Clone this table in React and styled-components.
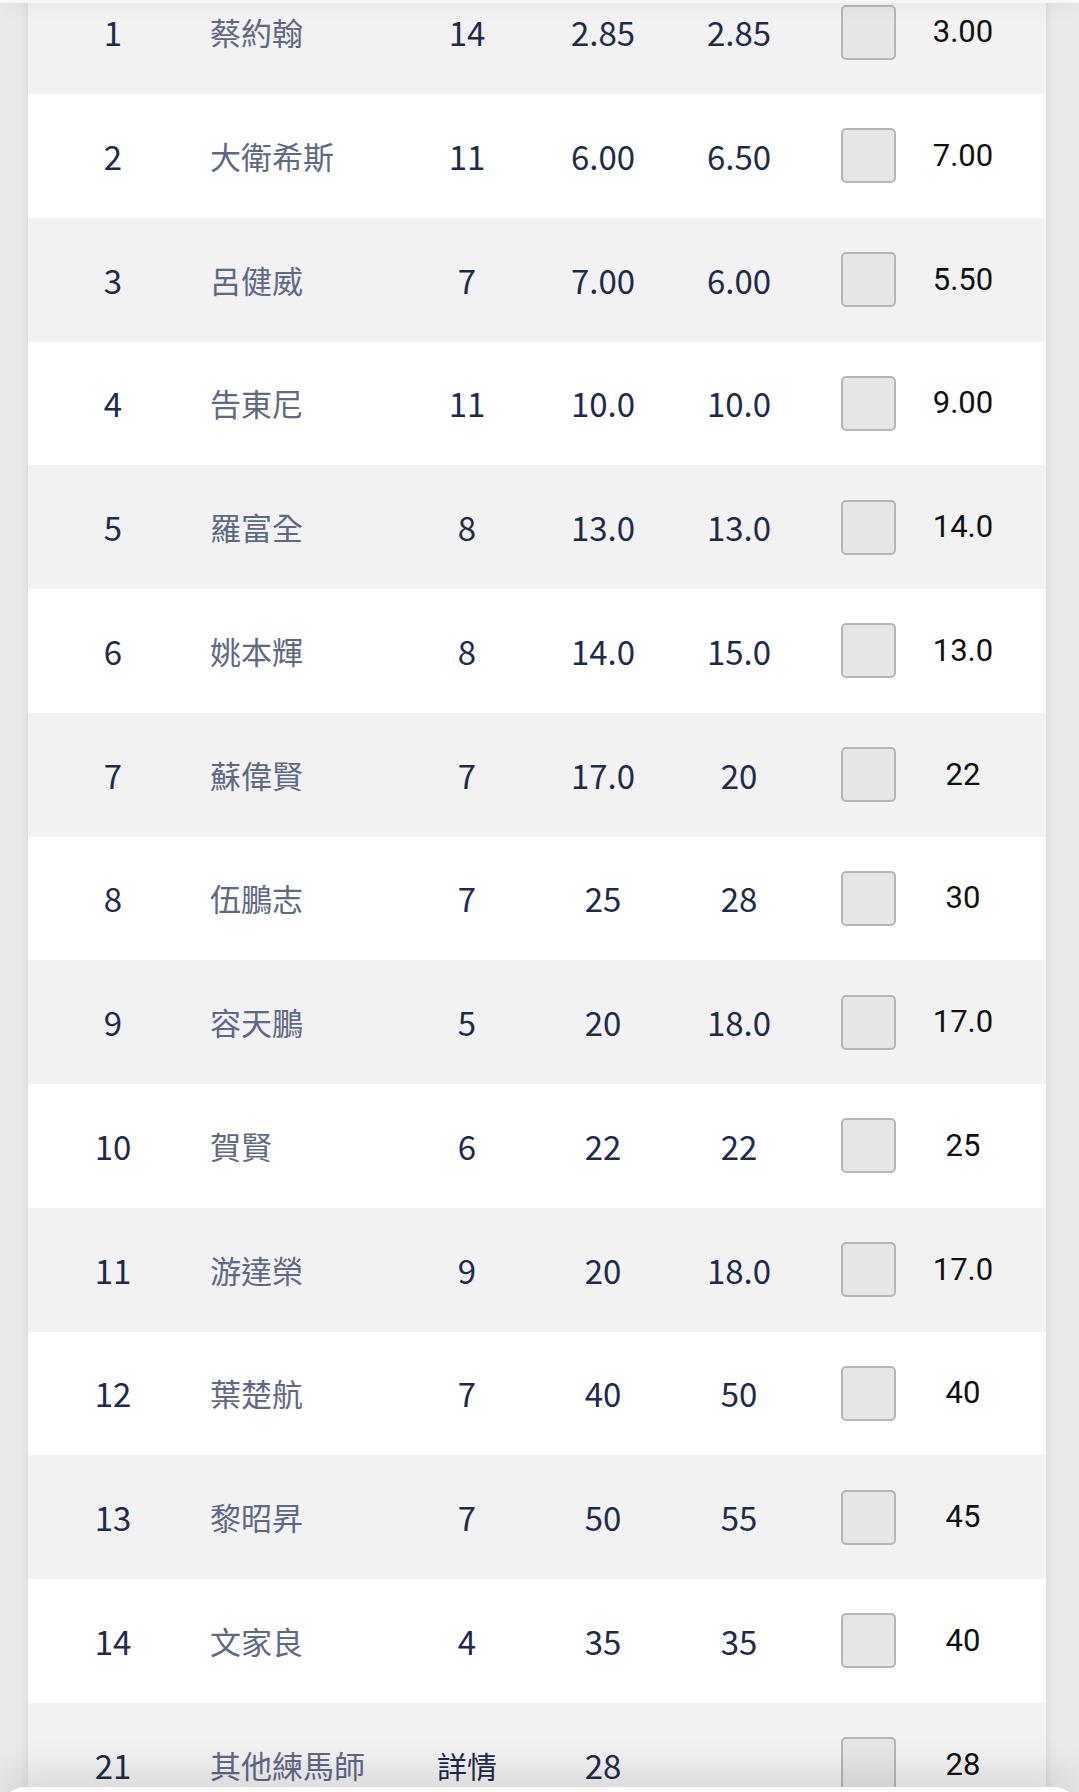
import React from "react";
import styled, { createGlobalStyle } from "styled-components";

const rows = [
  { no: "1", name: "蔡約翰", count: "14", a: "2.85", b: "2.85", c: "3.00" },
  { no: "2", name: "大衛希斯", count: "11", a: "6.00", b: "6.50", c: "7.00" },
  { no: "3", name: "呂健威", count: "7", a: "7.00", b: "6.00", c: "5.50" },
  { no: "4", name: "告東尼", count: "11", a: "10.0", b: "10.0", c: "9.00" },
  { no: "5", name: "羅富全", count: "8", a: "13.0", b: "13.0", c: "14.0" },
  { no: "6", name: "姚本輝", count: "8", a: "14.0", b: "15.0", c: "13.0" },
  { no: "7", name: "蘇偉賢", count: "7", a: "17.0", b: "20", c: "22" },
  { no: "8", name: "伍鵬志", count: "7", a: "25", b: "28", c: "30" },
  { no: "9", name: "容天鵬", count: "5", a: "20", b: "18.0", c: "17.0" },
  { no: "10", name: "賀賢", count: "6", a: "22", b: "22", c: "25" },
  { no: "11", name: "游達榮", count: "9", a: "20", b: "18.0", c: "17.0" },
  { no: "12", name: "葉楚航", count: "7", a: "40", b: "50", c: "40" },
  { no: "13", name: "黎昭昇", count: "7", a: "50", b: "55", c: "45" },
  { no: "14", name: "文家良", count: "4", a: "35", b: "35", c: "40" },
  { no: "21", name: "其他練馬師", count: "詳情", a: "28", b: "", c: "28", more: true },
];

const App = () => {
  return (
    <Page>
      <GlobalStyle />
      <Table>
        {rows.map((r, i) => (
          <Row key={r.no} shaded={i % 2 === 0}>
            <NumCell>{r.no}</NumCell>
            <NameCell>{r.name}</NameCell>
            <NumCell cjk={r.more}>{r.count}</NumCell>
            <NumCell>{r.a}</NumCell>
            <NumCell>{r.b}</NumCell>
            <BoxCell>
              <CheckBox type="button" aria-label={"select " + r.no} />
            </BoxCell>
            <OddsCell>{r.c}</OddsCell>
          </Row>
        ))}
      </Table>
      <TopShade />
      <BottomSheet />
    </Page>
  );
};

export default App;

const GlobalStyle = createGlobalStyle`
  html, body {
    margin: 0;
    padding: 0;
    background: #eaeaea;
    overflow: hidden;
  }
  * {
    box-sizing: border-box;
  }
`;

const Page = styled.div`
  position: relative;
  height: 1792px;
  overflow: hidden;
  padding: 0 33px 0 28px;
  background: #eaeaea;
  font-family: "Noto Sans CJK TC", "Noto Sans", sans-serif;
`;

const TopShade = styled.div`
  position: absolute;
  top: 0;
  left: 0;
  right: 0;
  height: 3px;
  background: #f7f7f7;
  box-shadow: 0 2px 16px rgba(0, 0, 0, 0.16);
`;

const BottomSheet = styled.div`
  position: absolute;
  bottom: -20px;
  left: 0;
  right: 0;
  height: 25px;
  background: #ffffff;
  border-radius: 26px 26px 0 0;
  box-shadow: 0 -8px 40px rgba(0, 0, 0, 0.18);
`;

const Table = styled.div`
  margin-top: -29.75px;
  background: #ffffff;
  box-shadow: 0 0 9px rgba(0, 0, 0, 0.1);
`;

const Row = styled.div`
  display: grid;
  grid-template-columns: 170px 210px 118px 154px 118px 110px 138px;
  align-items: center;
  height: 123.75px;
  background: ${(p) => (p.shaded ? "#f2f2f2" : "#ffffff")};
`;

const NumCell = styled.div`
  display: flex;
  justify-content: center;
  font-family: "Noto Sans CJK TC", sans-serif;
  font-size: ${(p) => (p.cjk ? "30px" : "33px")};
  line-height: 40px;
  color: #1d2b4f;
  white-space: nowrap;
`;

const NameCell = styled.div`
  padding-left: 12px;
  font-family: "Noto Sans CJK TC", sans-serif;
  font-size: 31px;
  line-height: 40px;
  color: #5d6987;
  white-space: nowrap;
`;

const BoxCell = styled.div`
  display: flex;
  justify-content: flex-end;
  padding-right: 12px;
`;

const CheckBox = styled.button`
  width: 55px;
  height: 55px;
  padding: 0;
  background: #e6e6e6;
  border: 2px solid #b6b6b6;
  border-radius: 5px;
`;

const OddsCell = styled.div`
  display: flex;
  justify-content: center;
  padding-right: 28px;
  font-family: Roboto, "Liberation Sans", sans-serif;
  font-size: 31px;
  line-height: 40px;
  color: #111111;
  white-space: nowrap;
`;
